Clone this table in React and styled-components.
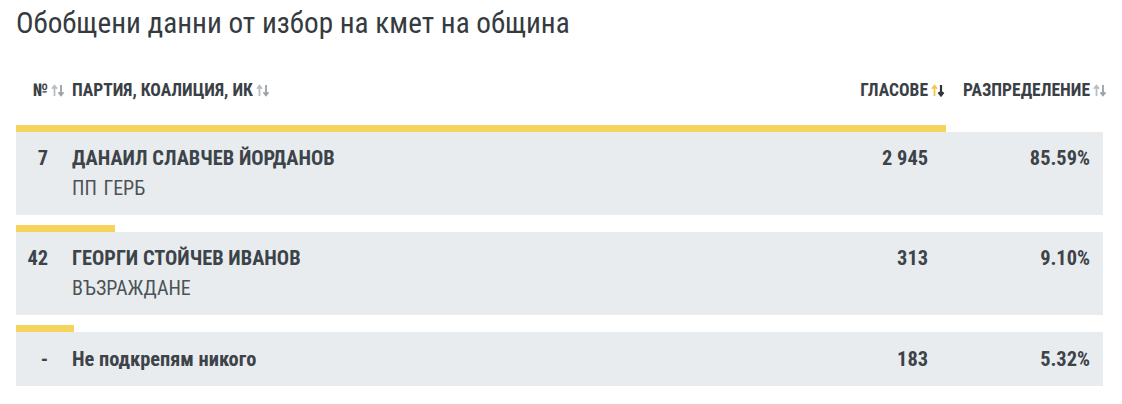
import React from "react";
import styled, { createGlobalStyle } from "styled-components";

const Global = createGlobalStyle`
  html, body { margin: 0; padding: 0; background: #fff; }
  body {
    font-family: "Roboto Condensed", "Liberation Sans Narrow", "DejaVu Sans Condensed", Roboto, sans-serif;
    color: #3c4349;
  }
`;

const Page = styled.div`
  width: 1122px;
  height: 404px;
  box-sizing: border-box;
  padding: 5px 19px 0 16px;
  overflow: hidden;
`;

const Title = styled.h1`
  margin: 0;
  font-size: 29.2px;
  line-height: 36px;
  font-weight: 400;
  color: #353b40;
`;

const Grid = `
  display: grid;
  grid-template-columns: 32px 1fr 100px 162px;
  column-gap: 0;
  padding-right: 13px;
`;

const HeadRow = styled.div`
  ${Grid}
  margin-top: 36px;
  height: 26px;
  align-items: center;
  font-size: 17.5px;
  font-weight: 700;
  text-transform: uppercase;
  color: #3a4045;
`;

const HeadCell = styled.div`
  display: flex;
  align-items: center;
  justify-content: ${(p) => (p.$right ? "flex-end" : "flex-start")};
  padding-left: ${(p) => (p.$indent ? "24px" : "0")};
  white-space: nowrap;
  & > svg { margin-right: ${(p) => (p.$right ? "-17px" : "0")}; }
`;

const Arrows = styled.svg`
  width: 14px;
  height: 13px;
  margin-left: 3px;
  flex: none;
`;

const SortIcon = ({ active }) => (
  <Arrows viewBox="0 0 14 13">
    <path d="M3.5 12V2.2M1 4.8L3.5 1.6 6 4.8" fill="none" stroke={active ? "#f2c744" : "#b9bdc1"} strokeWidth="1.8" />
    <path d="M10 1v9.8M7.5 8.2L10 11.4 12.5 8.2" fill="none" stroke={active ? "#2f3438" : "#9ca1a6"} strokeWidth={active ? "2.2" : "1.8"} />
  </Arrows>
);

const Rows = styled.div`
  margin-top: 22px;
  display: flex;
  flex-direction: column;
  gap: 10px;
`;

const Entry = styled.div``;

const Bar = styled.div`
  height: 7px;
  background: #f6d35b;
`;

const Body = styled.div`
  ${Grid}
  align-items: start;
  background: #e9ecef;
  padding-top: ${(p) => (p.$single ? "14px" : "13px")};
  padding-bottom: ${(p) => (p.$single ? "14px" : "15px")};
  font-size: 20.4px;
  line-height: 26px;
`;

const Num = styled.div`
  text-align: right;
  font-weight: 700;
`;

const NameCol = styled.div`
  display: flex;
  flex-direction: column;
  gap: 5px;
  padding-left: 24px;
`;

const Name = styled.div`
  font-weight: 700;
  text-transform: ${(p) => (p.$plain ? "none" : "uppercase")};
`;

const Party = styled.div`
  font-size: 20px;
  line-height: 24px;
  font-weight: 400;
  word-spacing: 2px;
  color: #4b5358;
`;

const Value = styled.div`
  text-align: right;
  font-weight: 700;
`;

const data = [
  { n: "7", name: "Данаил Славчев Йорданов", party: "ПП ГЕРБ", votes: "2 945", pct: 85.59 },
  { n: "42", name: "Георги Стойчев Иванов", party: "ВЪЗРАЖДАНЕ", votes: "313", pct: 9.1 },
  { n: "-", name: "Не подкрепям никого", plain: true, votes: "183", pct: 5.32 },
];

export default function App() {
  return (
    <>
      <Global />
      <Page>
        <Title>Обобщени данни от избор на кмет на община</Title>
        <HeadRow>
          <HeadCell $right>№<SortIcon /></HeadCell>
          <HeadCell $indent>Партия, коалиция, ИК<SortIcon /></HeadCell>
          <HeadCell $right>Гласове<SortIcon active /></HeadCell>
          <HeadCell $right>Разпределение<SortIcon /></HeadCell>
        </HeadRow>
        <Rows>
          {data.map((d) => (
            <Entry key={d.n}>
              <Bar style={{ width: `${d.pct}%` }} />
              <Body $single={!d.party}>
                <Num>{d.n}</Num>
                <NameCol>
                  <Name $plain={d.plain}>{d.name}</Name>
                  {d.party && <Party>{d.party}</Party>}
                </NameCol>
                <Value>{d.votes}</Value>
                <Value>{d.pct.toFixed(2)}%</Value>
              </Body>
            </Entry>
          ))}
        </Rows>
      </Page>
    </>
  );
}
